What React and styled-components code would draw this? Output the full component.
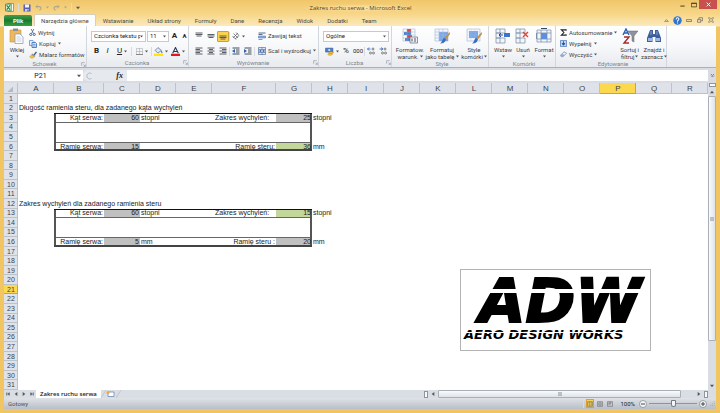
import React, { useState } from 'react';
import styled, { createGlobalStyle } from 'styled-components';

const GlobalStyle = createGlobalStyle`
  * {
    box-sizing: border-box;
  }

  body {
    margin: 0;
    font-family: Roboto, "Open Sans", sans-serif;
    font-size: 6px;
    line-height: 8px;
    color: #3b3f46;
  }

  button, input, select {
    font: inherit;
    color: inherit;
    margin: 0;
    padding: 0;
    border: none;
    background: none;
  }

  svg {
    display: block;
    flex: none;
  }
`;

const Window = styled.div`
  display: flex;
  flex-direction: column;
  height: 100vh;
  padding: 0 4px 4px;
  background: linear-gradient(#f0c669 0, #f7d688 14px, #fbe9bd 26px, #f0c562 27px);
`;

const TitleBar = styled.header`
  display: grid;
  grid-template-columns: 1fr auto 1fr;
  align-items: center;
  height: 15px;
  margin-right: -1px;
`;

const QuickAccess = styled.div`
  display: flex;
  align-items: center;
  gap: 4px;
  padding-left: 1px;
`;

const Title = styled.h1`
  margin: 0;
  padding: 0 10px;
  font-family: "Open Sans", sans-serif;
  font-size: 6px;
  font-weight: 400;
  color: #4f4224;
  background: radial-gradient(closest-side, #fbe3aa, transparent);
`;

const WindowButtons = styled.div`
  display: flex;
  justify-content: flex-end;
  align-self: start;
`;

const IconButton = styled.button`
  display: flex;
  align-items: center;
  justify-content: center;
  min-width: ${(p) => p.$w || 8}px;
  height: ${(p) => p.$h || 9}px;
  background: ${(p) => p.$bg || 'none'};
`;

const TabRow = styled.nav`
  display: flex;
  align-items: flex-end;
  height: 11px;
`;

const FileTab = styled.button`
  width: 28px;
  height: 11px;
  margin-right: 2px;
  border-radius: 2px 2px 0 0;
  background: linear-gradient(#3f9d4b, #1c7a2e 50%, #36a13f);
  color: #fff;
  font-weight: 700;
`;

const Tab = styled.button`
  height: 12px;
  padding: 0 6px;
  white-space: nowrap;
  border: 1px solid ${(p) => (p.$active ? '#d5cfbd' : 'transparent')};
  border-bottom: none;
  border-radius: 2px 2px 0 0;
  background: ${(p) => (p.$active ? '#fdfdfd' : 'none')};
  color: #4f4a3d;
`;

const TabTools = styled.div`
  display: flex;
  align-items: center;
  gap: 3px;
  height: 12px;
  margin-left: auto;
  padding-right: 1px;
`;

const Ribbon = styled.section`
  display: flex;
  height: 42px;
  background: linear-gradient(#ffffff, #f7f8fa 50%, #e7eaee);
  border-bottom: 1px solid #a9b0ba;
`;

const GroupBox = styled.div`
  display: flex;
  flex-direction: column;
  width: ${(p) => p.$w}px;
  padding-left: 4px;
  border-right: 1px solid #d3d7dd;
`;

const GroupBody = styled.div`
  display: flex;
  flex: 1;
  gap: ${(p) => p.$gap || 0}px;
`;

const GroupTitle = styled.div`
  display: flex;
  align-items: center;
  height: 9px;
  color: #7d838d;

  span {
    flex: 1;
    text-align: center;
  }
`;

const Stack = styled.div`
  display: flex;
  flex-direction: column;
  gap: ${(p) => p.$gap || 0}px;
  padding-top: ${(p) => p.$top || 0}px;
`;

const Line = styled.div`
  display: flex;
  align-items: center;
  gap: ${(p) => p.$gap || 0}px;
  height: 12px;
`;

const SmallButton = styled.button`
  display: flex;
  align-items: center;
  gap: 2px;
  height: 11px;
  white-space: nowrap;
`;

const BigButton = styled.button`
  display: flex;
  flex-direction: column;
  align-items: center;
  width: ${(p) => p.$w}px;
  padding-top: 2px;
  line-height: 7px;
  white-space: nowrap;

  svg {
    margin-bottom: 2px;
  }

  svg + svg {
    margin-top: 2px;
  }

  span {
    display: flex;
    align-items: center;
    gap: 1px;
  }

  span svg {
    margin: 0;
  }
`;

const ToolButton = styled.button`
  display: flex;
  align-items: center;
  justify-content: center;
  gap: 2px;
  width: ${(p) => p.$w || 12}px;
  height: 11px;
  border: 1px solid ${(p) => (p.$on ? '#c8a03c' : 'transparent')};
  border-radius: 1px;
  background: ${(p) => (p.$on ? '#fbd24f' : 'none')};
  color: #222;
  font-size: ${(p) => p.$size || 8}px;
`;

const Divider = styled.i`
  width: 1px;
  height: 9px;
  background: #d8dbe0;
`;

const Combo = styled.label`
  display: flex;
  align-items: center;
  width: ${(p) => p.$w}px;
  height: 11px;
  padding: 0 2px;
  border: 1px solid #c6cad0;
  background: #fff;

  select {
    flex: 1;
    min-width: 0;
    appearance: none;
    outline: none;
    overflow: hidden;
    color: #222;
  }
`;

const FormulaRow = styled.div`
  display: flex;
  height: 15px;
  padding: 2px 0;
  background: #d9dde3;
`;

const NameBox = styled.label`
  display: flex;
  align-items: center;
  width: 79px;
  padding-right: 2px;
  background: #fff;

  input {
    flex: 1;
    min-width: 0;
    text-align: center;
    font-size: 7px;
    color: #222;
  }
`;

const FxArea = styled.div`
  display: flex;
  align-items: center;
  justify-content: space-between;
  width: 44px;
  padding: 0 4px 0 2px;
  border-radius: 5px 0 0 5px;
  background: #e6e9ed;
  color: #222;
  font-family: "Liberation Serif", serif;
  font-style: italic;
  font-weight: 700;
  font-size: 8px;
`;

const FormulaInput = styled.input`
  flex: 1;
  min-width: 0;
  background: #fff !important;
`;

const Workspace = styled.main`
  display: flex;
  flex: 1;
  min-height: 0;
`;

const Sheet = styled.div`
  position: relative;
  flex: 1;
  min-width: 0;
  background: #fff;
  overflow: hidden;
`;

const Grid = styled.table`
  width: 100%;
  height: 100%;
  table-layout: fixed;
  border-collapse: separate;
  border-spacing: 0;
  font-family: "Liberation Sans", Arial, sans-serif;
  color: #222;
`;

const HeadCell = styled.th`
  padding: 0;
  font-size: ${(p) => (p.scope === 'row' ? 7 : 8)}px;
  line-height: 8px;
  font-weight: 400;
  color: #3d444d;
  background: ${(p) => (p.$on ? '#fcd84f' : '#dfe3e9')};
  box-shadow: inset -1px -1px 0 ${(p) => (p.$on ? '#d3a13a' : '#bcc2ca')};
`;

const line = {
  thickTop: 'inset 0 1px 0 #111',
  thickBottom: 'inset 0 -2px 0 #444',
  thickLeft: 'inset 2px 0 0 #555',
  thickRight: 'inset -2px 0 0 #555',
  thinTop: 'inset 0 1px 0 #666',
  thinBottom: 'inset 0 -1px 0 #666',
};

const Cell = styled.td`
  padding: 0 1px;
  font-size: 7px;
  line-height: 8px;
  white-space: nowrap;
  text-align: ${(p) => (p.$right ? 'right' : 'left')};
  background: ${(p) => p.$fill || 'none'};
  box-shadow: ${(p) => p.$lines || 'none'};
`;

const Picture = styled.figure`
  position: absolute;
  left: 456px;
  top: 186px;
  width: 191px;
  height: 82px;
  margin: 0;
  border: 1px solid #b3b3b3;
  background: #fff;

  svg {
    overflow: visible;
  }
`;

const VScroll = styled.div`
  display: flex;
  flex-direction: column;
  align-items: center;
  width: 8px;
  background: #d9dee5;
`;

const SplitBox = styled.i`
  width: ${(p) => (p.$vertical ? 4 : 7)}px;
  height: ${(p) => (p.$vertical ? 7 : 4)}px;
  border: 1px solid #8e959f;
  background: #f8f9fa;
`;

const VTrack = styled.div`
  flex: 1;
  width: 8px;
`;

const Thumb = styled.div`
  display: flex;
  align-items: center;
  justify-content: center;
  width: ${(p) => (p.$vertical ? '8px' : '95%')};
  height: ${(p) => (p.$vertical ? '86%' : '8px')};
  border: 1px solid #a8afb9;
  border-radius: 1px;
  background: linear-gradient(${(p) => (p.$vertical ? '90deg' : '180deg')}, #fafbfc, #dfe3e8);
`;

const BottomRow = styled.div`
  display: flex;
  align-items: center;
  height: 8px;
  background: #d9dee5;
`;

const SheetNav = styled.div`
  display: flex;
  width: 32px;
`;

const SheetTab = styled.button`
  height: 8px;
  padding: 0 4px;
  background: #fff;
  color: #222;
  font-family: "Open Sans", sans-serif;
  font-weight: 600;
  line-height: 7px;
  white-space: nowrap;
`;

const HScroll = styled.div`
  display: flex;
  align-items: center;
  width: 41%;
  margin-left: auto;
  padding-right: 8px;
`;

const HTrack = styled.div`
  flex: 1;
`;

const StatusBar = styled.footer`
  display: flex;
  align-items: center;
  height: 11px;
  padding: 0 1px 0 4px;
  background: linear-gradient(#dfe2e6, #b9bfc8);
  color: #4a4f57;
`;

const StatusTools = styled.div`
  display: flex;
  align-items: center;
  gap: 2px;
  margin-left: auto;
`;

const ViewButton = styled(IconButton)`
  border: 1px solid ${(p) => (p.$bg ? '#d6a334' : 'transparent')};
`;

const Percent = styled.span`
  padding: 0 2px 0 4px;
  color: #222;
`;

const Zoom = styled.input`
  appearance: none;
  width: 48px;
  height: 8px;
  background: linear-gradient(#8d949e, #8d949e) center / 100% 1px no-repeat !important;

  &::-webkit-slider-thumb {
    appearance: none;
    width: 5px;
    height: 7px;
    border: 1px solid #737a84;
    border-radius: 1px 1px 3px 3px;
    background: #f7f8f9;
  }
`;

const Caret = ({ size = 3, dir = 0, color = '#555' }) => (
  <svg width={size} height={size} viewBox="0 0 6 6">
    <path d="M0 1h6L3 5z" fill={color} transform={`rotate(${dir} 3 3)`} />
  </svg>
);

const Svg = ({ w = 9, h = w, box = '0 0 16 16', children }) => (
  <svg width={w} height={h} viewBox={box} fill="none">
    {children}
  </svg>
);

const ExcelIcon = () => (
  <Svg w={9}>
    <path d="M5 1h10v14H5z" fill="#fff" stroke="#2c7d3a" />
    <path d="M1 2h10v12H1z" fill="#e9f5e6" stroke="#2c7d3a" strokeWidth="1.4" />
    <path d="M3 4l6 8M9 4l-6 8" stroke="#218233" strokeWidth="2.2" />
  </Svg>
);

const SaveIcon = () => (
  <Svg w={8}>
    <path d="M1 1h14v14H1z" fill="#5660b8" />
    <path d="M4 1h8v6H4z" fill="#f4f5fb" />
    <path d="M4 10h8v5H4z" fill="#c9cdec" />
    <path d="M9 11h2v4H9z" fill="#3b4495" />
  </Svg>
);

const UndoIcon = ({ flip }) => (
  <Svg w={7}>
    <g transform={flip ? 'translate(16 0) scale(-1 1)' : undefined} stroke="#a9a592">
      <path d="M3 6h7c5 0 5 7 0 8" strokeWidth="2.4" />
      <path d="M6 2L2 6l4 4" strokeWidth="2" />
    </g>
  </Svg>
);

const PasteIcon = () => (
  <Svg w={16}>
    <path d="M1 2h11v12H1z" fill="#edb95c" stroke="#cf943a" strokeWidth=".6" />
    <path d="M4 .5h5V3H4z" fill="#8b8f98" />
    <path d="M6 6h5l3 3v6.5H6z" fill="#fff" stroke="#8593ab" strokeWidth=".7" />
    <path d="M7.500 9h4M7.500 11h5M7.500 13h5" stroke="#a9bcdc" strokeWidth=".7" />
  </Svg>
);

const CutIcon = () => (
  <Svg w={7}>
    <path d="M5 0l5 10M11 0L6 10" stroke="#5c6f93" strokeWidth="2" />
    <circle cx="4" cy="12.500" r="2.500" stroke="#2d55b0" strokeWidth="2" />
    <circle cx="12" cy="12.500" r="2.500" stroke="#2d55b0" strokeWidth="2" />
  </Svg>
);

const CopyIcon = () => (
  <Svg w={8}>
    <path d="M1 1h7l2 2v8H1z" fill="#e6effb" stroke="#4677bf" strokeWidth="1.3" />
    <path d="M6 5h7l2 2v8H6z" fill="#cfe0f6" stroke="#2f62b4" strokeWidth="1.5" />
    <path d="M8 9h5M8 12h5" stroke="#2f62b4" />
  </Svg>
);

const BrushIcon = () => (
  <Svg w={8}>
    <path d="M9 7l5-6 2 2-5 6z" fill="#4b5a8b" />
    <path d="M7 5l6 5-3 2-5-4z" fill="#8c8d95" />
    <path d="M5 7l6 5-5 3-5-3z" fill="#f3c33d" stroke="#b98c26" strokeWidth=".7" />
  </Svg>
);

const BorderIcon = () => (
  <Svg w={7}>
    <path d="M1 1h14v14H1zM8 1v14M1 8h14" stroke="#a8adb5" strokeWidth="1.4" />
    <path d="M0 15h16" stroke="#777" strokeWidth="2" />
  </Svg>
);

const FillIcon = () => (
  <Svg w={9}>
    <path d="M7 1l6 5-6 5-5-5z" fill="#dfe7f2" stroke="#5c7397" strokeWidth="1.4" />
    <path d="M13 6c3 2 2 5 1 5s-2-2-1-5z" fill="#3b6fc4" />
    <path d="M0 12h16v4H0z" fill="#ffe800" />
  </Svg>
);

const FontColorIcon = () => (
  <Svg w={9}>
    <path d="M3 11L8 1l5 10M5 8h6" stroke="#2c3a58" strokeWidth="2" />
    <path d="M0 12h16v4H0z" fill="#e5161c" />
  </Svg>
);

// horizontal bars used by every alignment button, [x1, x2, y]
const bars = {
  top: [[1, 15, 2], [1, 15, 5], [3, 13, 8]],
  middle: [[1, 15, 5], [1, 15, 8], [3, 13, 11]],
  bottom: [[1, 15, 8], [1, 15, 11], [3, 13, 14]],
  left: [[1, 15, 2], [1, 10, 5], [1, 15, 8], [1, 10, 11], [1, 15, 14]],
  center: [[1, 15, 2], [4, 12, 5], [1, 15, 8], [4, 12, 11], [1, 15, 14]],
  right: [[1, 15, 2], [6, 15, 5], [1, 15, 8], [6, 15, 11], [1, 15, 14]],
};

const AlignIcon = ({ kind }) => (
  <Svg w={8}>
    {bars[kind].map(([a, b, y]) => (
      <path key={y} d={`M${a} ${y}H${b}`} stroke="#4a4e56" strokeWidth="1.8" />
    ))}
  </Svg>
);

const IndentIcon = ({ flip }) => (
  <Svg w={8}>
    <path d="M1 2h14M8 6h7M8 10h7M1 14h14" stroke="#454b57" strokeWidth="2" />
    <path d={flip ? 'M0 4l6 4-6 4z' : 'M6 4L0 8l6 4z'} fill="#2b62b8" />
  </Svg>
);

const OrientIcon = () => (
  <Svg w={8}>
    <path d="M1 8l7 7M3 3l9 9M8 1l6 6M2 12L12 2M6 14l8-7" stroke="#5b6068" strokeWidth="1.5" />
  </Svg>
);

const WrapIcon = () => (
  <Svg w={8}>
    <path d="M1 2h14M1 5h8" stroke="#5e6a80" strokeWidth="2" />
    <path d="M1 8h14v4H1z" fill="#8db1e6" stroke="#446ba9" />
    <path d="M1 15h8" stroke="#d8883a" strokeWidth="2" />
  </Svg>
);

const MergeIcon = () => (
  <Svg w={8}>
    <path d="M1 1h14v14H1zM1 5h14M1 11h14M8 1v4M8 11v4" fill="#dce8f8" stroke="#47618f" strokeWidth="1.2" />
    <path d="M5 8h6M5 6L3 8l2 2zM11 6l2 2-2 2z" stroke="#1f55ad" fill="#1f55ad" />
  </Svg>
);

const MoneyIcon = () => (
  <Svg w={9}>
    <path d="M1 2h13v7H1z" fill="#4e80cb" stroke="#2b5497" />
    <circle cx="7.500" cy="5.500" r="2" fill="#cfe0f8" />
    <ellipse cx="11" cy="10" rx="4" ry="1.600" fill="#f3c744" stroke="#a97b1c" strokeWidth=".8" />
    <ellipse cx="9" cy="13" rx="4" ry="1.800" fill="#f3c744" stroke="#a97b1c" strokeWidth=".8" />
  </Svg>
);

const DecimalIcon = ({ flip }) => (
  <Svg w={8}>
    <path d={flip ? 'M1 4h6M4 1l4 3-4 3' : 'M7 4H1M4 1L1 4l3 3'} stroke="#2c62b6" strokeWidth="1.6" />
    <circle cx="12" cy="4" r="2" stroke="#555" strokeWidth="1.4" />
    <circle cx="7" cy="12" r="2" stroke="#555" strokeWidth="1.4" />
    <circle cx="13" cy="12" r="2" stroke="#555" strokeWidth="1.4" />
  </Svg>
);

const CondIcon = () => (
  <Svg w={16}>
    <path d="M1 1h12v12H1z" fill="#fff" />
    <path d="M5 1h4v3H5zM5 7h5v3H5z" fill="#e04338" />
    <path d="M2 4h7v3H2zM3 10h6v3H3z" fill="#4b7fd0" />
    <path d="M5 1v12M9 1v12M1 1h12v12H1zM1 4h12M1 7h12M1 10h12" stroke="#93a6c6" strokeWidth=".5" />
    <path d="M8 9h7.500v6H8z" fill="#eef1f6" stroke="#5b6b85" strokeWidth=".7" />
    <path d="M10 10.500v3M12 11h2M12 13h2" stroke="#333" strokeWidth=".8" />
  </Svg>
);

const TableIcon = ({ plain }) => (
  <Svg w={16}>
    <path d="M1 1h13v12H1z" fill="#f4f8fe" stroke="#93a6c6" strokeWidth=".5" />
    <path d={plain ? 'M3 3h9v7H3z' : 'M5 4h9v9H5z'} fill="#7ba6e6" />
    <path d="M5 1v12M9 1v12M1 4h13M1 7h13M1 10h13" stroke="#a6b9da" strokeWidth={plain ? '.3' : '.6'} />
    <path d="M15.500 4l-5 6 1.500 1.500L16 6z" fill="#c39046" />
    <path d="M10 9.500l2 2c-1 3-3 4-6 4 2-1 2-4 4-6z" fill="#3a6cc0" />
  </Svg>
);

const CellsIcon = ({ kind }) => (
  <Svg w={16}>
    <path
      d={kind === 'format' ? 'M1 2h14v12H1zM5 2v12M11 2v12M1 5h14M1 11h14' : 'M1 1h9v4H1zM5 1v4M1 10h9v5H1zM5 10v5M1 5h4v5H1z'}
      fill="#f3f6fb"
      stroke="#8494ad"
      strokeWidth=".8"
    />
    {kind === 'insert' && <path d="M9 5h6v4H9z" fill="#3d74c9" />}
    {kind === 'insert' && <path d="M8 7H4M6 5L4 7l2 2" stroke="#2a4f8c" />}
    {kind === 'delete' && <path d="M8 4l5 5M13 4l-5 5" stroke="#e2432e" strokeWidth="1.400" />}
    {kind === 'format' && <path d="M5 5h6v6H5z" fill="#5d8fdb" />}
    {kind === 'format' && <path d="M5 .5h6M0 5v6" stroke="#33496f" />}
  </Svg>
);

const SigmaIcon = () => (
  <Svg w={7}>
    <path d="M14 4V2H3l6 6-6 6h11v-2" stroke="#222" strokeWidth="2.400" />
  </Svg>
);

const FillDownIcon = () => (
  <Svg w={7}>
    <path d="M1 1h14v14H1z" fill="#bcd4f5" stroke="#3b68b0" strokeWidth="1.500" />
    <path d="M8 3v6M5 8l3 4 3-4z" stroke="#174fa8" strokeWidth="2" fill="#174fa8" />
  </Svg>
);

const EraserIcon = () => (
  <Svg w={7}>
    <path d="M1 10l8-8 6 3-8 8H3z" fill="#f2f5fa" stroke="#57688a" strokeWidth="1.300" />
    <path d="M1 10l4-4 6 3-4 4H3z" fill="#8eaee0" />
  </Svg>
);

const SortIcon = () => (
  <Svg w={16}>
    <path d="M1 7l3-6 3 6M2 5h4" stroke="#2b5fb3" strokeWidth="1.400" />
    <path d="M2 9h5l-5 6h5" stroke="#a52b2b" strokeWidth="1.400" />
    <path d="M6 3h10l-4 5v6l-2-1V8z" fill="#8e939b" stroke="#63686f" strokeWidth=".5" />
  </Svg>
);

const FindIcon = () => (
  <Svg w={16}>
    <path d="M4 2h3v4h2V2h3l3 8v4H9.500V9h-3v5H1v-4z" fill="#3d5f9b" />
    <path d="M2 10h4v3H2zM10 10h4v3h-4z" fill="#9db8e4" />
    <path d="M5 3v4M11 3v4" stroke="#89a5d4" />
  </Svg>
);

const LauncherIcon = () => (
  <Svg w={5} box="0 0 8 8">
    <path d="M1 6V1h5M4 4l3 3M7 4v3H4" stroke="#9097a1" />
  </Svg>
);

const GlyphIcon = ({ d, w = 6, color = '#6d6a60', sw = 2 }) => (
  <Svg w={w}>
    <path d={d} stroke={color} strokeWidth={sw} />
  </Svg>
);

const HelpIcon = () => (
  <Svg w={9}>
    <circle cx="8" cy="8" r="7.500" fill="#2f74d0" />
    <path d="M5.500 6c0-4 5-3 5-.5C10.500 7.500 8 7.500 8 10M8 11.500v2" stroke="#fff" strokeWidth="1.800" />
  </Svg>
);

const GripIcon = () => (
  <Svg w={4}>
    <path d="M0 3h16M0 8h16M0 13h16" stroke="#8d949e" strokeWidth="3" />
  </Svg>
);

const NewSheetIcon = () => (
  <Svg w={22} h={8} box="0 0 44 16">
    <path d="M0 16L10 0M30 16L40 0" stroke="#a8afb9" />
    <path d="M14 4h12v9H14z" fill="#fff" stroke="#6a83b0" strokeWidth="1.500" />
    <circle cx="14" cy="5" r="3" fill="#f0a93a" />
  </Svg>
);

const RoundButtonIcon = ({ plus }) => (
  <Svg w={8}>
    <circle cx="8" cy="8" r="7" fill="#f6f7f8" stroke="#7a818b" strokeWidth="1.400" />
    <path d={plus ? 'M4 8h8M8 4v8' : 'M4 8h8'} stroke="#444" strokeWidth="2" />
  </Svg>
);

const Group = ({ title, w, gap, launcher, children }) => (
  <GroupBox $w={w}>
    <GroupBody $gap={gap}>{children}</GroupBody>
    <GroupTitle>
      <span>{title}</span>
      {launcher && <LauncherIcon />}
    </GroupTitle>
  </GroupBox>
);

const tabs = ['Narzędzia główne', 'Wstawianie', 'Układ strony', 'Formuły', 'Dane', 'Recenzja', 'Widok', 'Dodatki', 'Team'];

const columns = 'ABCDEFGHIJKLMNOPQR'.split('');
const wide = { B: 50, F: 64 };
const rows = Array.from({ length: 31 }, (_, i) => i + 1);

const GRAY = '#c0c0c0';
const GREEN = '#c4d79b';

const cells = {
  A2: { text: 'Długość ramienia steru, dla zadanego kąta wychyleń' },
  B3: { text: 'Kąt serwa:', right: true },
  C3: { text: '60', right: true, fill: GRAY },
  D3: { text: 'stopni' },
  F3: { text: 'Zakres wychyleń:', right: true, pad: true },
  G3: { text: '25', right: true, fill: GRAY },
  H3: { text: 'stopni' },
  B6: { text: 'Ramię serwa:', right: true },
  C6: { text: '15', right: true, fill: GRAY },
  F6: { text: 'Ramię steru:', right: true },
  G6: { text: '36', right: true, fill: GREEN },
  H6: { text: 'mm' },
  A12: { text: 'Zakres wychyleń dla zadanego ramienia steru' },
  B13: { text: 'Kąt serwa:', right: true },
  C13: { text: '60', right: true, fill: GRAY },
  D13: { text: 'stopni' },
  F13: { text: 'Zakres wychyleń:', right: true, pad: true },
  G13: { text: '15', right: true, fill: GREEN },
  H13: { text: 'stopni' },
  B16: { text: 'Ramię serwa:', right: true },
  C16: { text: '5', right: true, fill: GRAY },
  D16: { text: 'mm' },
  F16: { text: 'Ramię steru :', right: true },
  G16: { text: '20', right: true, fill: GRAY },
  H16: { text: 'mm' },
};

// borders of the two framed blocks, B3:G6 and B13:G16
const linesFor = (col, row) => {
  const start = row >= 13 ? 13 : 3;
  if (row < start || row > start + 3 || col < 'B' || col > 'G') return undefined;
  const list = [];
  if (row === start) list.push(line.thickTop);
  if (row === start + 3) list.push(line.thickBottom);
  if (col === 'B') list.push(line.thickLeft);
  if (col === 'G') list.push(line.thickRight);
  if (row === start) list.push(line.thinBottom);
  if (row === start + 3) list.push(line.thinTop);
  return list.join(', ') || undefined;
};

const Spreadsheet = () => (
  <Grid>
    <colgroup>
      <col style={{ width: 14 }} />
      {columns.map((c) => (
        <col key={c} style={{ width: wide[c] || 36 }} />
      ))}
    </colgroup>
    <thead>
      <tr style={{ height: 11 }}>
        <HeadCell aria-label="Zaznacz wszystko">
          <Svg w={12} h={8}>
            <path d="M14 3v11H3z" fill="#b4bac3" />
          </Svg>
        </HeadCell>
        {columns.map((c) => (
          <HeadCell key={c} scope="col" $on={c === 'P'}>{c}</HeadCell>
        ))}
      </tr>
    </thead>
    <tbody>
      {rows.map((r) => (
        <tr key={r}>
          <HeadCell scope="row" $on={r === 21}>{r}</HeadCell>
          {columns.map((c) => {
            const cell = cells[c + r] || {};
            return (
              <Cell key={c} $right={cell.right} $fill={cell.fill} $lines={linesFor(c, r)}>
                {cell.text}
                {cell.pad && '\u00a0\u00a0\u00a0'}
              </Cell>
            );
          })}
        </tr>
      ))}
    </tbody>
  </Grid>
);

const Logo = () => (
  <svg width="100%" height="100%" viewBox="0 0 189 80" role="img" aria-label="ADW Aero Design Works">
    <g fontFamily="DejaVu Sans, sans-serif" fontWeight="700" fontStyle="italic" fill="#000" stroke="#000">
      <text x="18" y="52" fontSize="60" strokeWidth="2">ADW</text>
      <text x="3" y="69" fontSize="13" strokeWidth="0">AERO DESIGN WORKS</text>
    </g>
    <path d="M0 19h189v4H0z" fill="#fff" />
    <path d="M0 62h189v1H0z" fill="#fff" />
  </svg>
);

const App = () => {
  const [tab, setTab] = useState(tabs[0]);
  const [zoom, setZoom] = useState(50);
  const [formula, setFormula] = useState('');

  return (
    <>
      <GlobalStyle />
      <Window>
        <TitleBar>
          <QuickAccess>
            <ExcelIcon />
            <Divider />
            <SaveIcon />
            <UndoIcon />
            <Caret color="#a9a592" />
            <UndoIcon flip />
            <Caret color="#a9a592" />
            <Divider />
            <Caret size={4} />
          </QuickAccess>
          <Title>Zakres ruchu serwa - Microsoft Excel</Title>
          <WindowButtons>
            <IconButton $w={12} aria-label="Minimalizuj"><GlyphIcon w={5} d="M1 13h14" color="#3f3720" sw={3} /></IconButton>
            <IconButton $w={11} aria-label="Maksymalizuj"><GlyphIcon d="M1 3h14v10H1zM1 4h14" color="#3f3720" /></IconButton>
            <IconButton $w={18} $bg="#c9504c" aria-label="Zamknij"><GlyphIcon w={5} d="M2 2l12 12M14 2L2 14" color="#fff" sw={3} /></IconButton>
          </WindowButtons>
        </TitleBar>
        <TabRow>
          <FileTab>Plik</FileTab>
          {tabs.map((t) => (
            <Tab key={t} $active={t === tab} onClick={() => setTab(t)}>{t}</Tab>
          ))}
          <TabTools>
            <IconButton aria-label="Zwiń wstążkę"><GlyphIcon w={5} d="M2 11l6-6 6 6z" /></IconButton>
            <IconButton aria-label="Pomoc"><HelpIcon /></IconButton>
            <IconButton aria-label="Minimalizuj okno"><GlyphIcon d="M1 7h14v5H1z" /></IconButton>
            <IconButton aria-label="Przywróć okno"><GlyphIcon d="M1 7h9v7H1zM5 6V2h10v8h-4" /></IconButton>
            <IconButton aria-label="Zamknij okno"><GlyphIcon d="M1 2h4l3 4 3-4h4l-4 6 4 6h-4l-3-4-3 4H1l4-6z" sw={1.5} /></IconButton>
          </TabTools>
        </TabRow>

        <Ribbon>
          <Group title="Schowek" w={83} gap={3} launcher>
            <BigButton $w={18}>
              <PasteIcon />
              Wklej
              <Caret />
            </BigButton>
            <Stack $top={1}>
              <SmallButton><CutIcon />Wytnij</SmallButton>
              <SmallButton><CopyIcon />Kopiuj <Caret /></SmallButton>
              <SmallButton><BrushIcon />Malarz formatów</SmallButton>
            </Stack>
          </Group>
          <Group title="Czcionka" w={102} launcher>
            <Stack $top={4} $gap={3}>
              <Line $gap={1}>
                <Combo $w={55}>
                  <select aria-label="Czcionka"><option>Czcionka tekstu podstawowego</option></select>
                  <Caret />
                </Combo>
                <Combo $w={22}>
                  <select aria-label="Rozmiar czcionki"><option>11</option></select>
                  <Caret />
                </Combo>
                <ToolButton $w={9} aria-label="Zwiększ czcionkę"><b>A</b></ToolButton>
                <ToolButton $w={9} $size={6} aria-label="Zmniejsz czcionkę"><b>A</b></ToolButton>
              </Line>
              <Line>
                <ToolButton $w={11}><b>B</b></ToolButton>
                <ToolButton $w={11}><em>I</em></ToolButton>
                <ToolButton $w={18}><u>U</u><Caret /></ToolButton>
                <Divider />
                <ToolButton $w={19} aria-label="Obramowania"><BorderIcon /><Caret /></ToolButton>
                <Divider />
                <ToolButton $w={18} aria-label="Kolor wypełnienia"><FillIcon /><Caret /></ToolButton>
                <ToolButton $w={16} aria-label="Kolor czcionki"><FontColorIcon /><Caret /></ToolButton>
              </Line>
            </Stack>
          </Group>
          <Group title="Wyrównanie" w={130} gap={3} launcher>
            <Stack $top={4} $gap={3}>
              <Line>
                <ToolButton aria-label="Do góry"><AlignIcon kind="top" /></ToolButton>
                <ToolButton aria-label="Do środka"><AlignIcon kind="middle" /></ToolButton>
                <ToolButton $on aria-label="Do dołu"><AlignIcon kind="bottom" /></ToolButton>
                <Divider />
                <ToolButton $w={17} aria-label="Orientacja"><OrientIcon /><Caret /></ToolButton>
              </Line>
              <Line>
                <ToolButton aria-label="Do lewej"><AlignIcon kind="left" /></ToolButton>
                <ToolButton aria-label="Wyśrodkuj"><AlignIcon kind="center" /></ToolButton>
                <ToolButton aria-label="Do prawej"><AlignIcon kind="right" /></ToolButton>
                <Divider />
                <ToolButton aria-label="Zmniejsz wcięcie"><IndentIcon /></ToolButton>
                <ToolButton aria-label="Zwiększ wcięcie"><IndentIcon flip /></ToolButton>
                <Divider />
              </Line>
            </Stack>
            <Stack $top={4} $gap={4}>
              <SmallButton><WrapIcon />Zawijaj tekst</SmallButton>
              <SmallButton><MergeIcon />Scal i wyśrodkuj <Caret /></SmallButton>
            </Stack>
          </Group>
          <Group title="Liczba" w={73} launcher>
            <Stack $top={4} $gap={3}>
              <Line>
                <Combo $w={66}>
                  <select aria-label="Format liczb"><option>Ogólne</option></select>
                  <Caret />
                </Combo>
              </Line>
              <Line>
                <ToolButton $w={17} aria-label="Format księgowy"><MoneyIcon /><Caret /></ToolButton>
                <ToolButton>%</ToolButton>
                <ToolButton $size={6}>000</ToolButton>
                <Divider />
                <ToolButton aria-label="Zwiększ dziesiętne"><DecimalIcon /></ToolButton>
                <ToolButton aria-label="Zmniejsz dziesiętne"><DecimalIcon flip /></ToolButton>
              </Line>
            </Stack>
          </Group>
          <Group title="Style" w={97}>
            <BigButton $w={28}><CondIcon />Formatow.<span>warunk. <Caret /></span></BigButton>
            <BigButton $w={36}><TableIcon />Formatuj<span>jako tabelę <Caret /></span></BigButton>
            <BigButton $w={28}><TableIcon plain />Style<span>komórki <Caret /></span></BigButton>
          </Group>
          <Group title="Komórki" w={67}>
            <BigButton $w={20}><CellsIcon kind="insert" />Wstaw<Caret /></BigButton>
            <BigButton $w={20}><CellsIcon kind="delete" />Usuń<Caret /></BigButton>
            <BigButton $w={22}><CellsIcon kind="format" />Format<Caret /></BigButton>
          </Group>
          <Group title="Edytowanie" w={111} gap={1}>
            <Stack $top={1}>
              <SmallButton><SigmaIcon />Autosumowanie <Caret /></SmallButton>
              <SmallButton><FillDownIcon />Wypełnij <Caret /></SmallButton>
              <SmallButton><EraserIcon />Wyczyść <Caret /></SmallButton>
            </Stack>
            <BigButton $w={24}><SortIcon />Sortuj i<span>filtruj <Caret /></span></BigButton>
            <BigButton $w={24}><FindIcon />Znajdź i<span>zaznacz <Caret /></span></BigButton>
          </Group>
        </Ribbon>

        <FormulaRow>
          <NameBox>
            <input aria-label="Pole nazwy" defaultValue="P21" />
            <Caret size={4} />
          </NameBox>
          <FxArea>
            <Svg w={8}><path d="M13 3a6 6 0 100 10" stroke="#a8afb9" strokeWidth="1.500" /></Svg>
            fx
          </FxArea>
          <FormulaInput aria-label="Pasek formuły" value={formula} onChange={(e) => setFormula(e.target.value)} />
          <IconButton $h={11} aria-label="Rozwiń pasek formuły"><GlyphIcon w={5} d="M3 3l5 5 5-5M3 8l5 5 5-5" color="#555" /></IconButton>
        </FormulaRow>

        <Workspace>
          <Sheet>
            <Spreadsheet />
            <Picture><Logo /></Picture>
          </Sheet>
          <VScroll>
            <SplitBox />
            <IconButton aria-label="W górę"><Caret size={4} dir={180} /></IconButton>
            <VTrack>
              <Thumb $vertical><GripIcon /></Thumb>
            </VTrack>
            <IconButton aria-label="W dół"><Caret size={4} /></IconButton>
          </VScroll>
        </Workspace>

        <BottomRow>
          <SheetNav>
            <IconButton $h={8} aria-label="Pierwszy arkusz"><GlyphIcon w={4} d="M3 2v12M13 3L7 8l6 5z" color="#444" sw={3} /></IconButton>
            <IconButton $h={8} aria-label="Poprzedni arkusz"><Caret size={4} dir={90} /></IconButton>
            <IconButton $h={8} aria-label="Następny arkusz"><Caret size={4} dir={270} /></IconButton>
            <IconButton $h={8} aria-label="Ostatni arkusz"><GlyphIcon w={4} d="M13 2v12M3 3l6 5-6 5z" color="#444" sw={3} /></IconButton>
          </SheetNav>
          <SheetTab>Zakres ruchu serwa</SheetTab>
          <NewSheetIcon />
          <HScroll>
            <SplitBox $vertical />
            <IconButton $w={10} $h={8} aria-label="W lewo"><Caret size={4} dir={90} /></IconButton>
            <HTrack>
              <Thumb><GripIcon /></Thumb>
            </HTrack>
            <IconButton $w={10} $h={8} aria-label="W prawo"><Caret size={4} dir={270} /></IconButton>
            <SplitBox $vertical />
          </HScroll>
        </BottomRow>

        <StatusBar>
          Gotowy
          <StatusTools>
            <Divider />
            <ViewButton $bg="#fbd24f" aria-label="Normalny"><GlyphIcon d="M1 2h14v12H1zM6 2v12M11 2v12" color="#777" /></ViewButton>
            <ViewButton aria-label="Układ strony"><GlyphIcon d="M1 2h14v12H1zM5 5h6v6H5z" color="#777" /></ViewButton>
            <ViewButton aria-label="Podgląd podziału stron"><GlyphIcon d="M1 2h14v12H1zM6 2v6M10 2v6H1" color="#777" /></ViewButton>
            <Percent>100%</Percent>
            <IconButton aria-label="Pomniejsz"><RoundButtonIcon /></IconButton>
            <Zoom type="range" aria-label="Powiększenie" value={zoom} onChange={(e) => setZoom(e.target.value)} />
            <IconButton aria-label="Powiększ"><RoundButtonIcon plus /></IconButton>
            <Svg w={6}><path d="M14 1v2M14 6v2M14 11v2M9 6v2M9 11v2M4 11v2" stroke="#8d949e" strokeWidth="2" /></Svg>
          </StatusTools>
        </StatusBar>
      </Window>
    </>
  );
};

export default App;
